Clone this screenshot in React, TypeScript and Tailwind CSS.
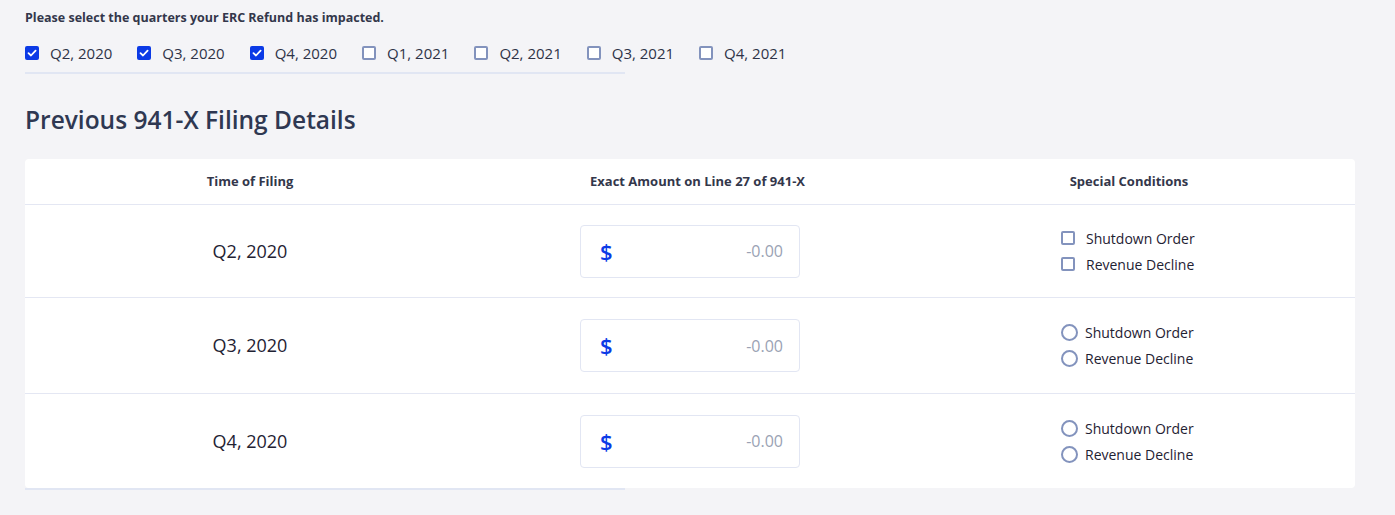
import { useState } from "react";

const quarters = ["Q2, 2020", "Q3, 2020", "Q4, 2020", "Q1, 2021", "Q2, 2021", "Q3, 2021", "Q4, 2021"];

const Check = ({ on }: { on: boolean }) =>
  on ? (
    <span className="shrink-0 w-[14px] h-[14px] rounded-[2px] bg-[#0b3ae6] flex items-center justify-center">
      <svg width="10" height="10" viewBox="0 0 10 10">
        <path d="M1.5 5.2 L4 7.5 L8.6 2.6" fill="none" stroke="white" strokeWidth="1.8" strokeLinecap="round" strokeLinejoin="round" />
      </svg>
    </span>
  ) : (
    <span className="shrink-0 w-[14px] h-[14px] rounded-[2px] border-2 border-[#8393bd] bg-white" />
  );

const Radio = () => <span className="shrink-0 w-[17px] h-[17px] rounded-full border-2 border-[#8393bd] bg-white" />;

const Row = ({ label, radio, h }: { label: string; radio?: boolean; h: string }) => (
  <div className={`grid grid-cols-[450px_445px_1fr] items-center border-t border-[#e4e7f3] ${h}`}>
    <div className="text-center text-[18px] text-[#1f2233]">{label}</div>
    <div className="flex justify-center pr-[15px]">
      <div className="w-[220px] h-[53px] border border-[#e2e6f3] rounded-[4px] flex items-center justify-between pl-[19px] pr-[16px]">
        <span className="text-[#0b3ae6] text-[22px] font-semibold">$</span>
        <span className="text-[16px] text-[#9aa2b4]">-0.00</span>
      </div>
    </div>
    <div className="flex flex-col gap-[5px] pl-[141px] text-[14px] text-[#1f2233]">
      {["Shutdown Order", "Revenue Decline"].map((t) => (
        <div key={t} className={`flex items-center ${radio ? "gap-[7px]" : "gap-[11px]"}`}>
          {radio ? <Radio /> : <Check on={false} />}
          <span>{t}</span>
        </div>
      ))}
    </div>
  </div>
);

export default function App() {
  const [sel] = useState([true, true, true, false, false, false, false]);
  return (
    <div className="min-h-[515px] bg-[#f4f4f7] px-[25px] pt-[9px] font-['Open_Sans',sans-serif] text-[#2e3347]">
      <p className="text-[12.5px] font-bold text-[#33374b]">Please select the quarters your ERC Refund has impacted.</p>
      <div className="pt-[14px] pb-[8px] flex gap-[25px] whitespace-nowrap">
        {quarters.map((q, i) => (
          <label key={q} className="flex items-center gap-[11px] text-[15px] text-[#2e3347]">
            <Check on={sel[i]} />
            <span>{q}</span>
          </label>
        ))}
      </div>
      <div className="w-[600px] h-[2px] bg-[#e1e6f3]" />
      <h2 className="mt-[28px] text-[24.5px] font-semibold text-[#2f3852]">Previous 941-X Filing Details</h2>
      <div className="mt-[20px] w-[1330px] bg-white rounded-[4px]">
        <div className="grid grid-cols-[450px_445px_1fr] h-[45px] items-center text-[13px] font-bold text-[#33374b]">
          <div className="text-center">Time of Filing</div>
          <div className="text-center">Exact Amount on Line 27 of 941-X</div>
          <div className="text-center pr-[17px]">Special Conditions</div>
        </div>
        <Row label="Q2, 2020" h="h-[93px]" />
        <Row label="Q3, 2020" h="h-[96px]" radio />
        <Row label="Q4, 2020" h="h-[95px]" radio />
      </div>
      <div className="w-[600px] h-[2px] bg-[#e1e6f3]" />
    </div>
  );
}
